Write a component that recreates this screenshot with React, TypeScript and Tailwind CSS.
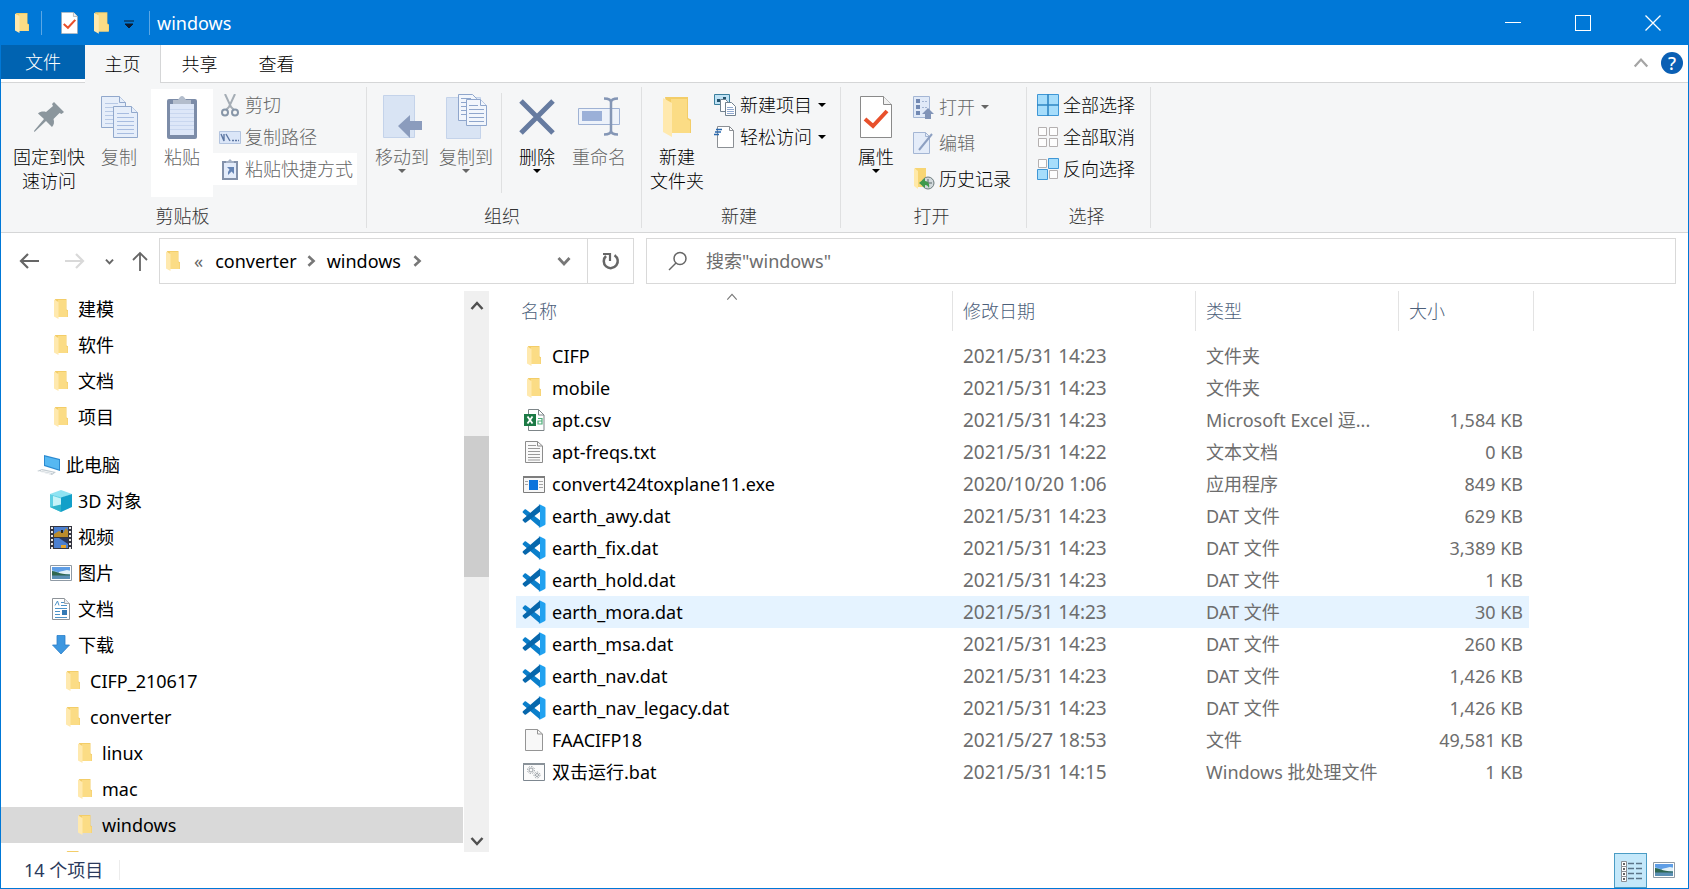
import type { ReactNode } from "react"

function Folder({ className = "w-[14px] h-5" }: { className?: string }) {
  return (
    <svg viewBox="0 0 14 20" className={className} aria-hidden="true">
      <path d="M1 0h11.5v10.500l1.500.8V18H4z" fill="#f3cd68" />
      <path d="M4 1h8v10l1.500 1V18H4z" fill="#fbdc85" />
      <path d="M0 .5 4.500 3v17L0 17.500z" fill="#ffe9ae" />
    </svg>
  )
}

function Computer() {
  return (
    <svg viewBox="0 0 24 22" className="h-[22px] w-6" aria-hidden="true">
      <path d="M7 1 23 5v12L7 12z" fill="#2b8ad0" />
      <path d="m8 2.500 14 3.400v9.500L8 11z" fill="#56b8f2" />
      <path d="m0 17 5-2 14 3-4 3z" fill="#c3ccd2" />
      <path d="m2 17.500 12 2.500M4 16.500l12 2.400" stroke="#fff" strokeWidth=".8" />
    </svg>
  )
}

function Cube() {
  return (
    <svg viewBox="0 0 22 22" className="size-[22px]" aria-hidden="true">
      <path d="M11 0 22 4 11 8 0 4z" fill="#8fe3f2" />
      <path d="M0 4l11 3.500V22L0 17z" fill="#5fd0e4" />
      <path d="m3 6 8 2.500v7L3 18z" fill="#c6f3f8" />
      <path d="m22 4-11 3.500V22l11-5z" fill="#12a0c9" />
      <path d="m0 17 11-2.500V22z" fill="#2fb3cb" />
    </svg>
  )
}

function Film() {
  return (
    <svg viewBox="0 0 22 23" className="h-[23px] w-[22px]" aria-hidden="true">
      <path d="M0 0h22v23H0z" fill="#33343f" />
      <path d="M4 1h14v10H4zM4 12h14v10H4z" fill="#4b7fd0" />
      <path d="m4 8 5-3 4 2 3-5 2 3v6H4z" fill="#b98b2c" />
      <path d="m9 12 9 6v-6z" fill="#28375e" />
      <path d="M11 22v-3h5v3z" fill="#e6a52a" />
      <path d="M11 4h2v3h-2z" fill="#222" />
      <path d="M2 1v22M20 1v22" stroke="#e8e8e8" strokeWidth="2" strokeDasharray="2 2" />
    </svg>
  )
}

function Picture() {
  return (
    <svg viewBox="0 0 22 16" className="h-4 w-[22px]" aria-hidden="true">
      <path d="M.5.5h21v15H.5z" fill="#fff" stroke="#8f9aa5" />
      <path d="M2 2h18v12H2z" fill="#8fc4ee" />
      <path d="M2 2h18v3L8 7 2 5z" fill="#5f9ee6" />
      <path d="m9 7 8-2 3 1v3H9z" fill="#e2f0f8" />
      <path d="M2 6c4 0 6 3 18 3.500V11H2z" fill="#2e6650" />
      <path d="M2 10.500h18V14H2z" fill="#5a8fb4" />
    </svg>
  )
}

function Documents() {
  return (
    <svg viewBox="0 0 18 22" className="h-[22px] w-[18px]" aria-hidden="true">
      <path d="M.5.5h12l5 5v16H.500z" fill="#fff" stroke="#8d9399" />
      <path d="M12.500.5v5h5" fill="#e9edf0" stroke="#a2a8ad" />
      <path d="M3 7.500 5.500 3 7 7.500M9 4.500h3M9 7.500h6M3 10.500h12M3 13.500h5M3 16.500h5M3 19.500h12" fill="none" stroke="#4d93c8" />
      <path d="M10 12h5v5h-5z" fill="#357ab5" />
    </svg>
  )
}

function Download() {
  return (
    <svg viewBox="0 0 18 20" className="h-5 w-[18px]" aria-hidden="true">
      <path d="M5 .5h8V10h4.500L9 19 .5 10H5z" fill="#3d97e0" stroke="#2b7fc9" strokeWidth=".8" />
    </svg>
  )
}

function Excel() {
  return (
    <svg viewBox="0 0 21 22" className="h-[22px] w-[21px]" aria-hidden="true">
      <path d="M4.500.5h10l5.500 5.500v15.500H4.500z" fill="#fff" stroke="#7d8588" />
      <path d="M14.500.5V6H20" fill="none" stroke="#7d8588" />
      <path d="M0 5h12v12H0z" fill="#1c7a45" />
      <path d="m3.500 7.500 5 7m0-7-5 7" stroke="#fff" strokeWidth="1.800" />
      <path d="M14 9.500h4V15h-4v-3h4" fill="none" stroke="#4cae78" strokeWidth="1.200" />
    </svg>
  )
}

function TextFile() {
  return (
    <svg viewBox="0 0 18 22" className="h-[22px] w-[18px]" aria-hidden="true">
      <path d="M.5.5h12l5 4.500v16.500H.5z" fill="#fafafa" stroke="#8c8c8c" />
      <path d="M12.500.5V5h5" fill="none" stroke="#8c8c8c" />
      <path d="M3 4.500h8M3 7.500h12M3 10.500h12M3 13.500h12M3 16.500h12M3 19h12" stroke="#9a9a9a" />
    </svg>
  )
}

function BlankFile() {
  return (
    <svg viewBox="0 0 18 22" className="h-[22px] w-[18px]" aria-hidden="true">
      <path d="M.5.5h12l5 4.500v16.500H.5z" fill="#f8f8f8" stroke="#959595" />
      <path d="M12.500.5V5h5" fill="none" stroke="#959595" />
    </svg>
  )
}

function ExeFile() {
  return (
    <svg viewBox="0 0 22 17" className="h-[17px] w-[22px]" aria-hidden="true">
      <path d="M.5.5h21v16H.5z" fill="#f7f7f7" stroke="#7d7d7d" />
      <path d="M0 0h22v2H0z" fill="#7d7d7d" />
      <path d="M6 4h9v10H6z" fill="#0b74dc" />
      <path d="M2 5.500h3M2 8.500h3M16 5.500h4M16 8.500h4M16 11.500h4" stroke="#a5a5a5" />
    </svg>
  )
}

function BatFile() {
  return (
    <svg viewBox="0 0 22 18" className="h-[18px] w-[22px]" aria-hidden="true">
      <path d="M.5.5h21v17H.5z" fill="#fbfbfb" stroke="#7d8790" />
      <path d="M0 0h22v2H0z" fill="#8a9299" />
      <g fill="none" stroke="#9aa0a5">
        <circle cx="8" cy="7" r="2" />
        <circle cx="8" cy="7" r="3.500" strokeDasharray="1.500 1.200" />
        <circle cx="14" cy="12" r="1.500" />
        <circle cx="14" cy="12" r="3" strokeDasharray="1.500 1.200" />
      </g>
    </svg>
  )
}

function VsCode() {
  return (
    <svg viewBox="0 0 24 24" className="size-6" aria-hidden="true">
      <path d="M.9 7.200 2.600 5.600c.4-.4.900-.4 1.400 0L18 16.200V23.500L.9 8.800c-.5-.5-.5-1.100 0-1.600z" fill="#0b7fcb" />
      <path d="m.9 16.800 1.700 1.600c.4.4.9.4 1.400 0L18 7.800V.5L.9 15.200c-.5.5-.5 1.100 0 1.600z" fill="#0767ac" />
      <path d="M17.500 23.700c-.6.200-1.100 0-1.500-.4.600.5 2 .1 2-.9V1.600c0-1-1.400-1.400-2-.9.400-.4.900-.6 1.500-.4l5 2.400c.6.300 1 .8 1 1.400v15.800c0 .6-.4 1.100-1 1.400z" fill="#22a2f0" />
    </svg>
  )
}

function Pin() {
  return (
    <svg viewBox="0 0 32 32" className="size-8" aria-hidden="true">
      <path d="M21 1 31 11l-2.500 2-2-1-6 6c1 3 .5 6-1.500 8l-6-6L2 30.500 1 31l.3-1.500L11 18 5 12.500c2-2 5.500-2.500 8-1.500l7-6-1-2z" fill="#8b969d" />
    </svg>
  )
}

function CopyIcon() {
  return (
    <svg viewBox="0 0 37 42" className="h-[42px] w-[37px]" aria-hidden="true">
      <g stroke="#91a8cc" fill="#e6eefa">
        <path d="M.5.5h18l6 6v25H.5z" />
        <path d="M18.500.5v6h6" />
        <path d="M4 7.500h13M4 11.500h18M4 15.500h9M4 19.500h9M4 23.500h9M4 27.500h9" stroke="#b7c9e6" />
        <path d="M12.500 10.500h18l6 6v25h-24z" />
        <path d="M30.500 10.500v6h6" />
        <path d="M16 17.500h12M16 21.500h17M16 25.500h17M16 29.500h17M16 33.500h17M16 37.500h17" stroke="#a7bce0" />
      </g>
    </svg>
  )
}

function Clipboard() {
  return (
    <svg viewBox="0 0 30 43" className="h-[43px] w-[30px]" aria-hidden="true">
      <rect y="3" width="30" height="40" rx="2" fill="#7c8ca8" />
      <path d="M3 8h24v31H3z" fill="#dde7f8" />
      <path d="M3 13.500h24M3 17.500h24M3 21.500h24M3 25.500h24M3 29.500h24M3 33.500h24" stroke="#c9d7ef" />
      <path d="M6 8V4h5c1-2 2.500-4 4-4s3 2 4 4h5v4z" fill="#b3bdcc" />
    </svg>
  )
}

function Scissors() {
  return (
    <svg viewBox="0 0 18 23" className="h-[23px] w-[18px]" aria-hidden="true">
      <path d="m4 0 6 13 3 3M14 0 8 13l-3 3" fill="none" stroke="#a5adb5" strokeWidth="2" />
      <circle cx="4" cy="18.500" r="3" fill="none" stroke="#8796a8" strokeWidth="2" />
      <circle cx="14" cy="18.500" r="3" fill="none" stroke="#8796a8" strokeWidth="2" />
    </svg>
  )
}

function PathIcon() {
  return (
    <svg viewBox="0 0 22 13" className="h-[13px] w-[22px]" aria-hidden="true">
      <path d="M.5.5h21v12H.5z" fill="#dbe6f8" stroke="#b3c4df" />
      <path d="m2 3 3 7V3m2 0 4 7" fill="none" stroke="#5d77a3" strokeWidth="1.400" />
      <path d="M13 9.500h2M16 9.500h2M19 9.500h1" stroke="#5d77a3" strokeWidth="1.500" />
    </svg>
  )
}

function PasteShortcut() {
  return (
    <svg viewBox="0 0 16 21" className="h-[21px] w-4" aria-hidden="true">
      <path d="M1 3h14v17H1z" fill="#e4ecfa" stroke="#8391aa" strokeWidth="2" />
      <path d="M4 4V2h2l2-2 2 2h2v2z" fill="#a5b1c5" />
      <path d="M5 8h7v7l-2.500-2.500L6 16v-3l1.500-2.500z" fill="#6685b5" />
    </svg>
  )
}

function MoveTo() {
  return (
    <svg viewBox="0 0 39 44" className="h-11 w-[39px]" aria-hidden="true">
      <path d="M.5.5h31v42H.5z" fill="#d9e4f4" stroke="#c4d3ea" />
      <path d="M15 31 27 20v6h12v9H27v8z" fill="#8b9cbd" />
    </svg>
  )
}

function CopyTo() {
  return (
    <svg viewBox="0 0 41 46" className="h-[46px] w-[41px]" aria-hidden="true">
      <path d="M.5 3.500h34v41H.500z" fill="#d9e4f4" stroke="#c4d3ea" />
      <g fill="#f2f6fc" stroke="#8fa6cc">
        <path d="M12.500.5h14l4 4v22h-18z" />
        <path d="M15 4.500h10M15 8.500h5M15 12.500h5M15 16.500h5M15 20.500h5" />
        <path d="M20.500 5.500h14l6 6v20h-20z" />
        <path d="M34.500 5.500v6h6M23 11.500h9M23 15.500h15M23 19.500h15M23 23.500h15M23 27.500h15" />
      </g>
    </svg>
  )
}

function DeleteIcon() {
  return (
    <svg viewBox="0 0 38 38" className="size-[38px]" aria-hidden="true">
      <path d="m3 3 32 32M35 3 3 35" stroke="#667ba0" strokeWidth="5" />
    </svg>
  )
}

function RenameIcon() {
  return (
    <svg viewBox="0 0 42 40" className="h-10 w-[42px]" aria-hidden="true">
      <path d="M.5 11.500h41v16H.500z" fill="#edf2fa" stroke="#9fb2d4" />
      <path d="M4 14h20v10H4z" fill="#9bb0d8" />
      <path d="M26 1.500c4 0 7 1 7 4v28c0 3-3 4-7 4M40 1.500c-4 0-7 1-7 4M33 33.500c0 3 3 4 7 4" fill="none" stroke="#8496b5" strokeWidth="2.500" />
    </svg>
  )
}

function NewItem() {
  return (
    <svg viewBox="0 0 22 22" className="size-[22px]" aria-hidden="true">
      <path d="M.5.5h15v10H.5z" fill="#bfe2f5" stroke="#3b7f9d" />
      <path d="M3 5h3v3H3zM9 3h3v3H9z" fill="#23536d" />
      <g fill="#fff" stroke="#71818f">
        <path d="M6.500 5.500h5l2 2v10h-7z" />
        <path d="M11.500 8.500h6l4 4v9h-10z" />
      </g>
      <path d="M13 13.500h6M13 15.500h7M13 17.500h7M13 19.500h7" stroke="#8fa8cf" />
    </svg>
  )
}

function EasyAccess() {
  return (
    <svg viewBox="0 0 22 22" className="size-[22px]" aria-hidden="true">
      <path d="M3.500.5h12l4 4v17h-16z" fill="#fff" stroke="#8b8f94" />
      <path d="M15.500.5v4h4" fill="none" stroke="#8b8f94" />
      <path d="M2 3.500h6M1 6h6M0 8.500h5" stroke="#2a68ad" strokeWidth="1.300" />
    </svg>
  )
}

function Properties({ className = "h-[42px] w-8" }: { className?: string }) {
  return (
    <svg viewBox="0 0 32 42" className={className} aria-hidden="true">
      <path d="M.5.5h23l8 8v33H.5z" fill="#fff" stroke="#8a8a8a" />
      <path d="M23.500.5v8h8" fill="#f1f1f1" stroke="#8a8a8a" />
      <path d="m5 23 8 7 14-15" fill="none" stroke="#e8502b" strokeWidth="4" />
    </svg>
  )
}

function OpenIcon() {
  return (
    <svg viewBox="0 0 22 23" className="h-[23px] w-[22px]" aria-hidden="true">
      <path d="M.5.5h16v21H.5z" fill="#e1eaf8" stroke="#a4b6d4" />
      <path d="M3 3h4v4H3zM3 9h4v4H3zM3 15h4v4H3z" fill="#7289b3" />
      <path d="M9 5.500h5M9 11.500h5" stroke="#a4b6d4" strokeDasharray="2 1" />
      <path d="m15 12 6 6h-3v5h-6v-5H9z" fill="#8194b8" />
    </svg>
  )
}

function EditIcon() {
  return (
    <svg viewBox="0 0 22 22" className="size-[22px]" aria-hidden="true">
      <path d="M.5.5h12l4 4v17H.5z" fill="#e4ecf9" stroke="#a4b6d4" />
      <path d="M12.500.5v4h4" fill="none" stroke="#a4b6d4" />
      <path d="M6 18 19 2" stroke="#8da0c2" strokeWidth="2" />
    </svg>
  )
}

function HistoryIcon() {
  return (
    <svg viewBox="0 0 22 22" className="size-[22px]" aria-hidden="true">
      <path d="M2 0h11v19H5z" fill="#f7d573" />
      <path d="m1 0 4 3v18l-4-3z" fill="#ffe9a8" />
      <circle cx="15" cy="15" r="6" fill="#d2d9dc" stroke="#6c7a7c" />
      <path d="M15 11v4h4" fill="none" stroke="#596769" />
      <path d="m6 15 6-5v3c3 0 5 3 4 7-1-2-2-3-4-3v3z" fill="#3f9a4c" />
    </svg>
  )
}

function SelectIcon({ kind }: { kind: "all" | "none" | "invert" }) {
  if (kind === "all")
    return (
      <svg viewBox="0 0 22 22" className="size-[22px]" aria-hidden="true">
        <path d="M.5.5h21v21H.5z" fill="#a6ddfb" stroke="#3f97d6" />
        <path d="M11 0v22M0 11h22" stroke="#2f86c4" strokeWidth="1.600" />
      </svg>
    )
  if (kind === "none")
    return (
      <svg viewBox="0 0 22 22" className="size-[22px]" aria-hidden="true">
        <path d="M1.500 1.500h8v8h-8zM12.500 1.500h8v8h-8zM1.500 12.500h8v8h-8zM12.500 12.500h8v8h-8z" fill="#fdfdfd" stroke="#b4b0b0" />
      </svg>
    )
  return (
    <svg viewBox="0 0 22 22" className="size-[22px]" aria-hidden="true">
      <path d="M1.500 1.500h8v8h-8zM12.500 12.500h8v8h-8z" fill="#fdfdfd" stroke="#b4b0b0" />
      <path d="M11.500.5h10v10h-10zM.5 11.500h10v10H.5z" fill="#a6ddfb" stroke="#3f97d6" />
    </svg>
  )
}

function Caret() {
  return (
    <svg viewBox="0 0 8 4" className="h-1 w-2" aria-hidden="true">
      <path d="M0 0h8L4 4z" fill="currentColor" />
    </svg>
  )
}

function Chevron({ d, className, width = 2.500 }: { d: string; className: string; width?: number }) {
  return (
    <svg viewBox="0 0 14 14" className={className} aria-hidden="true">
      <path d={d} fill="none" stroke="currentColor" strokeWidth={width} />
    </svg>
  )
}

const UP = "m1.500 10 5.500-6 5.500 6"
const DOWN = "m1.500 4 5.500 6 5.500-6"
const RIGHT = "m4 1.500 6 5.500-6 5.500"

type LargeProps = { icon: ReactNode; lines: string[]; className: string; caret?: boolean; disabled?: boolean }

function LargeButton({ icon, lines, className, caret, disabled }: LargeProps) {
  return (
    <button className={`flex h-[108px] flex-col items-center ${disabled ? "text-[#666]" : "text-black"} ${className}`}>
      <span className="flex h-14 items-center">{icon}</span>
      {lines.map((line) => (
        <span key={line} className="leading-6 whitespace-nowrap">{line}</span>
      ))}
      {caret && <Caret />}
    </button>
  )
}

type SmallProps = { icon: ReactNode; label: string; className?: string; caret?: boolean; disabled?: boolean }

function SmallButton({ icon, label, className = "h-8", caret, disabled }: SmallProps) {
  return (
    <button className={`flex items-center gap-1 pl-[6px] whitespace-nowrap ${disabled ? "text-[#666]" : "text-black"} ${className}`}>
      <span className="flex w-[22px] justify-center">{icon}</span>
      {label}
      {caret && <span className="ml-[2px]"><Caret /></span>}
    </button>
  )
}

function Group({ label, className, children }: { label: string; className: string; children: ReactNode }) {
  return (
    <section className={`my-1 flex shrink-0 flex-col border-r border-[#dfe0e1] pt-[2px] ${className}`}>
      <div className="flex">{children}</div>
      <h2 className="pt-[5px] pr-2 text-center leading-7 text-[#333]">{label}</h2>
    </section>
  )
}

function Ribbon() {
  return (
    <div className="flex h-[151px] shrink-0 border-y border-[#d5d6d7] bg-[#f5f6f7] font-light">
      <Group label="剪贴板" className="w-[366px] pl-[6px]">
        <LargeButton icon={<Pin />} lines={["固定到快", "速访问"]} className="w-[84px]" />
        <LargeButton icon={<CopyIcon />} lines={["复制"]} className="w-14" disabled />
        <LargeButton icon={<Clipboard />} lines={["粘贴"]} className="ml-1 w-[62px] bg-white" disabled />
        <div className="flex flex-col">
          <SmallButton icon={<Scissors />} label="剪切" disabled />
          <SmallButton icon={<PathIcon />} label="复制路径" disabled />
          <SmallButton icon={<PasteShortcut />} label="粘贴快捷方式" className="h-8 bg-white pr-1" disabled />
        </div>
      </Group>
      <Group label="组织" className="w-[275px] pl-1">
        <LargeButton icon={<MoveTo />} lines={["移动到"]} className="w-[62px]" caret disabled />
        <LargeButton icon={<CopyTo />} lines={["复制到"]} className="ml-[2px] w-[62px]" caret disabled />
        <div className="mx-1 my-1 border-l border-[#dfe0e1]" />
        <LargeButton icon={<DeleteIcon />} lines={["删除"]} className="w-[62px]" caret />
        <LargeButton icon={<RenameIcon />} lines={["重命名"]} className="w-[62px]" disabled />
      </Group>
      <Group label="新建" className="w-[199px] pl-1">
        <LargeButton icon={<Folder className="h-[40px] w-7" />} lines={["新建", "文件夹"]} className="w-[62px]" />
        <div className="flex flex-col">
          <SmallButton icon={<NewItem />} label="新建项目" caret />
          <SmallButton icon={<EasyAccess />} label="轻松访问" caret />
        </div>
      </Group>
      <Group label="打开" className="w-[186px] pl-1">
        <LargeButton icon={<Properties />} lines={["属性"]} className="w-[62px]" caret />
        <div className="flex flex-col">
          <SmallButton icon={<OpenIcon />} label="打开" className="h-9" caret disabled />
          <SmallButton icon={<EditIcon />} label="编辑" className="h-9" disabled />
          <SmallButton icon={<HistoryIcon />} label="历史记录" className="h-9" />
        </div>
      </Group>
      <Group label="选择" className="w-[124px] pl-1">
        <div className="flex h-[108px] flex-col">
          <SmallButton icon={<SelectIcon kind="all" />} label="全部选择" />
          <SmallButton icon={<SelectIcon kind="none" />} label="全部取消" />
          <SmallButton icon={<SelectIcon kind="invert" />} label="反向选择" />
        </div>
      </Group>
    </div>
  )
}

function TitleBar() {
  return (
    <header className="flex h-11 shrink-0 items-center bg-[#0078d7] pb-px text-white">
      <Folder className="ml-[14px] h-5 w-[14px]" />
      <span className="ml-3 h-6 w-px bg-[#5ba7e5]" />
      <button aria-label="属性" className="ml-[19px]">
        <Properties className="h-[22px] w-[17px]" />
      </button>
      <button aria-label="新建文件夹" className="ml-4">
        <Folder className="h-[22px] w-[15px]" />
      </button>
      <button aria-label="自定义快速访问工具栏" className="ml-[14px]">
        <svg viewBox="0 0 12 9" className="mt-1 h-[9px] w-3">
          <path d="M1 1h10M2 4h8L6 8z" fill="#0b1c33" stroke="#0b1c33" />
        </svg>
      </button>
      <span className="ml-[14px] h-6 w-px bg-[#5ba7e5]" />
      <h1 className="ml-[7px]">windows</h1>
      <div className="ml-auto flex h-full">
        <button aria-label="最小化" className="flex w-[70px] items-center justify-center">
          <span className="h-px w-4 bg-white" />
        </button>
        <button aria-label="最大化" className="flex w-[70px] items-center justify-center">
          <span className="size-4 border border-white" />
        </button>
        <button aria-label="关闭" className="flex w-[70px] items-center justify-center">
          <svg viewBox="0 0 16 16" className="size-4">
            <path d="m.5.5 15 15M15.500.5l-15 15" stroke="#fff" strokeWidth="1.300" />
          </svg>
        </button>
      </div>
    </header>
  )
}

function Tabs() {
  return (
    <nav className="flex h-[37px] shrink-0 font-light text-black">
      <button className="h-[34px] w-[84px] bg-[#0063b1] text-white">文件</button>
      <button className="z-10 -mb-px w-[76px] border-r border-[#d5d6d7] bg-[#f5f6f7]">主页</button>
      <button className="w-[77px]">共享</button>
      <button className="w-[77px]">查看</button>
      <div className="ml-auto flex items-center gap-3 pr-[5px] pb-px">
        <button aria-label="最小化功能区" className="text-[#a5a5a5]">
          <Chevron d={UP} className="size-4" width={2} />
        </button>
        <button aria-label="帮助" className="size-[22px] rounded-full bg-[#0a5fb4] leading-[22px] font-medium text-white">?</button>
      </div>
    </nav>
  )
}

function AddressRow() {
  return (
    <div className="flex h-[58px] shrink-0 items-center pr-3 pb-[2px] pl-[18px] text-[#666]">
      <button aria-label="返回">
        <svg viewBox="0 0 20 16" className="h-4 w-5">
          <path d="M20 8H2M9 1 2 8l7 7" fill="none" stroke="currentColor" strokeWidth="2.200" />
        </svg>
      </button>
      <button aria-label="前进" className="ml-[26px] text-[#d9d9d9]">
        <svg viewBox="0 0 20 16" className="h-4 w-5">
          <path d="M0 8h18M11 1l7 7-7 7" fill="none" stroke="currentColor" strokeWidth="2.200" />
        </svg>
      </button>
      <button aria-label="最近浏览的位置" className="ml-5">
        <Chevron d={DOWN} className="size-[9px]" width={3} />
      </button>
      <button aria-label="上移" className="ml-[18px]">
        <svg viewBox="0 0 16 20" className="h-5 w-4">
          <path d="M8 20V2M1 9l7-7 7 7" fill="none" stroke="currentColor" strokeWidth="1.800" />
        </svg>
      </button>
      <div className="ml-[11px] flex h-[46px] w-[475px] items-center border border-[#d9d9d9] pl-[6px] text-black">
        <Folder />
        <span className="ml-[14px] text-[#666]">«</span>
        <button className="ml-3">converter</button>
        <Chevron d={RIGHT} className="ml-2 size-3 text-[#777]" width={3} />
        <button className="ml-[10px]">windows</button>
        <Chevron d={RIGHT} className="ml-[10px] size-3 text-[#777]" width={3} />
        <button aria-label="以前的位置" className="mr-4 ml-auto text-[#777]">
          <Chevron d={DOWN} className="size-[14px]" width={2.800} />
        </button>
        <button aria-label="刷新" className="flex h-full w-[46px] items-center justify-center border-l border-[#d9d9d9] text-[#666]">
          <svg viewBox="0 0 18 18" className="size-[18px]">
            <path d="M12.500 3.200A7 7 0 1 1 4 4" fill="none" stroke="currentColor" strokeWidth="2.500" />
            <path d="M1 2h7v7" fill="none" stroke="currentColor" strokeWidth="2.200" />
          </svg>
        </button>
      </div>
      <label className="ml-3 flex h-[46px] flex-1 items-center border border-[#d9d9d9] pl-[21px]">
        <svg viewBox="0 0 20 20" className="size-5">
          <circle cx="12" cy="7.500" r="6" fill="none" stroke="currentColor" strokeWidth="1.500" />
          <path d="m8 12-7 7" stroke="currentColor" strokeWidth="1.500" />
        </svg>
        <input type="search" aria-label="搜索" placeholder={'搜索"windows"'} className="ml-[18px] min-w-0 flex-1 outline-none placeholder:text-[#6d6d6d]" />
      </label>
    </div>
  )
}

const levels = ["pl-9", "pl-12", "pl-[60px]", "pl-[72px]"]

const tree = [
  { label: "建模", level: 1, icon: <Folder /> },
  { label: "软件", level: 1, icon: <Folder /> },
  { label: "文档", level: 1, icon: <Folder /> },
  { label: "项目", level: 1, icon: <Folder /> },
  { label: "此电脑", level: 0, icon: <Computer /> },
  { label: "3D 对象", level: 1, icon: <Cube /> },
  { label: "视频", level: 1, icon: <Film /> },
  { label: "图片", level: 1, icon: <Picture /> },
  { label: "文档", level: 1, icon: <Documents /> },
  { label: "下载", level: 1, icon: <Download /> },
  { label: "CIFP_210617", level: 2, icon: <Folder /> },
  { label: "converter", level: 2, icon: <Folder /> },
  { label: "linux", level: 3, icon: <Folder /> },
  { label: "mac", level: 3, icon: <Folder /> },
  { label: "windows", level: 3, icon: <Folder />, selected: true },
  { label: "", level: 2, icon: <Folder /> },
]

function Sidebar() {
  return (
    <aside className="flex w-[489px] shrink-0 overflow-hidden">
      <ul className="w-[462px]">
        {tree.map((item, i) => (
          <li key={i} className={item.level === 0 ? "mt-3" : ""}>
            <button className={`flex h-9 w-full items-center gap-[5px] ${levels[item.level]} ${item.selected ? "bg-[#d9d9d9]" : ""}`}>
              <span className="flex w-6 justify-center">{item.icon}</span>
              {item.label}
            </button>
          </li>
        ))}
      </ul>
      <div className="ml-px flex w-[25px] flex-col items-center bg-[#f0f0f0] text-[#505050]">
        <button aria-label="向上滚动" className="pt-2">
          <Chevron d={UP} className="size-[14px]" />
        </button>
        <div className="mt-[123px] h-[141px] w-full bg-[#cdcdcd]" />
        <button aria-label="向下滚动" className="mt-auto pb-1">
          <Chevron d={DOWN} className="size-[14px]" />
        </button>
      </div>
    </aside>
  )
}

const files = [
  { name: "CIFP", date: "2021/5/31 14:23", type: "文件夹", size: "", icon: <Folder /> },
  { name: "mobile", date: "2021/5/31 14:23", type: "文件夹", size: "", icon: <Folder /> },
  { name: "apt.csv", date: "2021/5/31 14:23", type: "Microsoft Excel 逗...", size: "1,584 KB", icon: <Excel /> },
  { name: "apt-freqs.txt", date: "2021/5/31 14:22", type: "文本文档", size: "0 KB", icon: <TextFile /> },
  { name: "convert424toxplane11.exe", date: "2020/10/20 1:06", type: "应用程序", size: "849 KB", icon: <ExeFile /> },
  { name: "earth_awy.dat", date: "2021/5/31 14:23", type: "DAT 文件", size: "629 KB", icon: <VsCode /> },
  { name: "earth_fix.dat", date: "2021/5/31 14:23", type: "DAT 文件", size: "3,389 KB", icon: <VsCode /> },
  { name: "earth_hold.dat", date: "2021/5/31 14:23", type: "DAT 文件", size: "1 KB", icon: <VsCode /> },
  { name: "earth_mora.dat", date: "2021/5/31 14:23", type: "DAT 文件", size: "30 KB", icon: <VsCode />, active: true },
  { name: "earth_msa.dat", date: "2021/5/31 14:23", type: "DAT 文件", size: "260 KB", icon: <VsCode /> },
  { name: "earth_nav.dat", date: "2021/5/31 14:23", type: "DAT 文件", size: "1,426 KB", icon: <VsCode /> },
  { name: "earth_nav_legacy.dat", date: "2021/5/31 14:23", type: "DAT 文件", size: "1,426 KB", icon: <VsCode /> },
  { name: "FAACIFP18", date: "2021/5/27 18:53", type: "文件", size: "49,581 KB", icon: <BlankFile /> },
  { name: "双击运行.bat", date: "2021/5/31 14:15", type: "Windows 批处理文件", size: "1 KB", icon: <BatFile /> },
]

function FileTable() {
  return (
    <main className="min-w-0 flex-1 overflow-hidden pl-[26px]">
      <table className="w-[1018px] table-fixed text-left whitespace-nowrap">
        <colgroup>
          <col />
          <col className="w-[243px]" />
          <col className="w-[203px]" />
          <col className="w-[130px]" />
          <col className="w-[5px]" />
        </colgroup>
        <thead className="text-[#4c607a]">
          <tr>
            <th className="relative p-0 pb-[9px] font-light">
              <div className="flex h-10 items-center border-r border-[#e3e3e3] pl-[5px]">名称</div>
              <Chevron d={UP} className="absolute top-0 left-[210px] size-3 text-[#777]" width={1.300} />
            </th>
            <th className="p-0 pb-[9px] font-light">
              <div className="flex h-10 items-center border-r border-[#e3e3e3] pl-[10px]">修改日期</div>
            </th>
            <th className="p-0 pb-[9px] font-light">
              <div className="flex h-10 items-center border-r border-[#e3e3e3] pl-[10px]">类型</div>
            </th>
            <th colSpan={2} className="p-0 pb-[9px] font-light">
              <div className="flex h-10 items-center border-r border-[#e3e3e3] pl-[10px]">大小</div>
            </th>
          </tr>
        </thead>
        <tbody className="text-[#6d6d6d]">
          {files.map((file) => {
            const bg = file.active ? "bg-[#e5f3ff]" : ""
            return (
              <tr key={file.name} className="h-8">
                <td className={`p-0 pl-[6px] text-black ${bg}`}>
                  <div className="flex items-center gap-[6px]">
                    <span className="flex w-6 justify-center">{file.icon}</span>
                    {file.name}
                  </div>
                </td>
                <td className={`p-0 pl-[10px] text-[19px] ${bg}`}>{file.date}</td>
                <td className={`p-0 pl-[10px] ${bg}`}>{file.type}</td>
                <td className={`p-0 pr-[6px] text-right ${bg}`}>{file.size}</td>
                <td className="p-0" />
              </tr>
            )
          })}
        </tbody>
      </table>
    </main>
  )
}

function StatusBar() {
  return (
    <footer className="flex h-9 shrink-0 items-center pl-[23px] text-[#2b3a5c]">
      <span className="pr-4">14 个项目</span>
      <span className="h-5 w-px bg-[#ececec]" />
      <div className="ml-auto flex h-full items-center pr-[13px]">
        <button aria-label="详细信息" className="mr-[6px] flex h-[35px] w-[33px] items-center justify-center self-end border border-[#4a9cc4] bg-[#c4e8fa]">
          <svg viewBox="0 0 22 22" className="size-[22px]">
            <path d="M1.500 1.500h5v5h-5zM1.500 6.500h5v5h-5zM1.500 11.500h5v5h-5zM1.500 16.500h5v5h-5z" fill="#fff" stroke="#8b8f94" />
            <path d="M3 4h2M3 9h2M3 14h2M3 19h2" stroke="#333" strokeWidth="1.500" />
            <path d="M8 3.500h6M16 3.500h6M8 8.500h6M16 8.500h6M8 13.500h6M16 13.500h6M8 18.500h6M16 18.500h6" stroke="#5b7488" strokeWidth="1.300" />
          </svg>
        </button>
        <button aria-label="大图标">
          <Picture />
        </button>
      </div>
    </footer>
  )
}

export default function App() {
  return (
    <div className="flex h-screen flex-col overflow-hidden border border-[#0078d7] bg-white font-['Noto_Sans','Noto_Sans_CJK_SC',sans-serif] text-[18px] leading-6">
      <TitleBar />
      <Tabs />
      <Ribbon />
      <AddressRow />
      <div className="flex min-h-0 flex-1">
        <Sidebar />
        <FileTable />
      </div>
      <StatusBar />
    </div>
  )
}
